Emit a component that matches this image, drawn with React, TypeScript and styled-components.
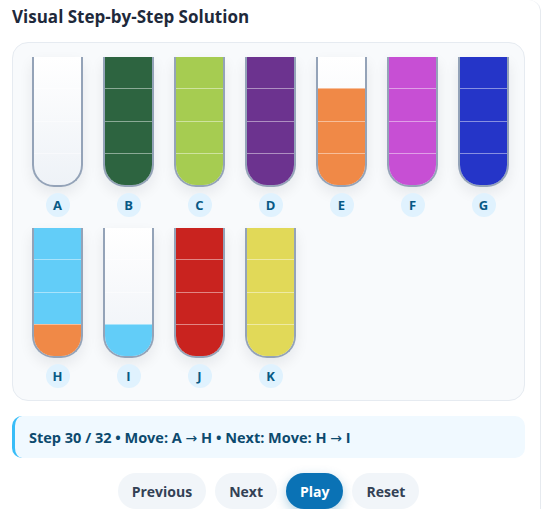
import styled, { createGlobalStyle } from "styled-components";

const GlobalStyle = createGlobalStyle`
  body {
    margin: 0;
    background: #ffffff;
    font-family: "Open Sans", "Liberation Sans", sans-serif;
  }
`;

const Card = styled.div`
  width: 541px;
  box-sizing: border-box;
  padding: 5px 15px 0 12px;
  border-right: 1px solid #e6eaef;
  border-top-right-radius: 12px;
`;

const Title = styled.h2`
  margin: 0 0 13px;
  font-size: 17px;
  line-height: 24px;
  font-weight: 700;
  color: #1e293b;
`;

const Board = styled.div`
  display: flex;
  flex-wrap: wrap;
  gap: 11px 20px;
  padding: 14px 12px 12px 19px;
  background: #f8fafc;
  border: 1px solid #e6ebf1;
  border-radius: 16px;
  box-sizing: border-box;
`;

const Column = styled.div`
  display: flex;
  flex-direction: column;
  align-items: center;
  gap: 6px;
  width: 51px;
`;

const Tube = styled.div`
  width: 51px;
  height: 130px;
  box-sizing: border-box;
  border: 2px solid #94a3b8;
  border-top: none;
  border-radius: 0 0 22px 22px;
  overflow: hidden;
  display: flex;
  flex-direction: column;
  background: linear-gradient(180deg, #ffffff 0%, #eef2f7 100%);
  box-shadow: 0 6px 14px rgba(15, 23, 42, 0.08);
`;

const Slot = styled.div<{ $color?: string }>`
  flex: 1;
  background: ${(p) => p.$color ?? "transparent"};
  & + & {
    border-top: 1px solid
      ${(p) => (p.$color ? "rgba(255, 255, 255, 0.45)" : "rgba(226, 232, 240, 0.7)")};
  }
`;

const Label = styled.div`
  width: 24px;
  height: 24px;
  border-radius: 50%;
  background: #e0f2fe;
  color: #075985;
  font-size: 13px;
  font-weight: 700;
  display: flex;
  align-items: center;
  justify-content: center;
`;

const Status = styled.div`
  margin-top: 15px;
  height: 42px;
  box-sizing: border-box;
  padding: 0 14px;
  display: flex;
  align-items: center;
  background: #f0f9ff;
  border-left: 3px solid #38bdf8;
  border-radius: 10px;
  color: #0c4a6e;
  font-size: 14.5px;
  font-weight: 700;
`;

const Arrow = styled.span`
  font-family: "DejaVu Sans", sans-serif;
  font-weight: 400;
  font-size: 14px;
`;

const Controls = styled.div`
  display: flex;
  justify-content: center;
  gap: 9px;
  margin-top: 15px;
`;

const Button = styled.button<{ $primary?: boolean }>`
  height: 36px;
  padding: 0 14px;
  border: none;
  border-radius: 18px;
  font-family: inherit;
  font-size: 14px;
  font-weight: 700;
  background: ${(p) => (p.$primary ? "#0a72b5" : "#f1f5f9")};
  color: ${(p) => (p.$primary ? "#ffffff" : "#334155")};
  box-shadow: ${(p) => (p.$primary ? "0 4px 12px rgba(3, 105, 161, 0.3)" : "none")};
  cursor: pointer;
`;

const colors: Record<string, string> = {
  green: "#2d6440",
  lime: "#a6cc51",
  purple: "#6c338f",
  orange: "#f08947",
  pink: "#c74fd4",
  blue: "#2535c8",
  sky: "#62cdf8",
  red: "#c9231f",
  yellow: "#e1d958",
};

// slots listed top to bottom, null = empty
const tubes: { name: string; slots: (string | null)[] }[] = [
  { name: "A", slots: [null, null, null, null] },
  { name: "B", slots: ["green", "green", "green", "green"] },
  { name: "C", slots: ["lime", "lime", "lime", "lime"] },
  { name: "D", slots: ["purple", "purple", "purple", "purple"] },
  { name: "E", slots: [null, "orange", "orange", "orange"] },
  { name: "F", slots: ["pink", "pink", "pink", "pink"] },
  { name: "G", slots: ["blue", "blue", "blue", "blue"] },
  { name: "H", slots: ["sky", "sky", "sky", "orange"] },
  { name: "I", slots: [null, null, null, "sky"] },
  { name: "J", slots: ["red", "red", "red", "red"] },
  { name: "K", slots: ["yellow", "yellow", "yellow", "yellow"] },
];

export default function App() {
  return (
    <>
      <GlobalStyle />
      <Card>
        <Title>Visual Step-by-Step Solution</Title>
        <Board>
          {tubes.map((t) => (
            <Column key={t.name}>
              <Tube>
                {t.slots.map((s, i) => (
                  <Slot key={i} $color={s ? colors[s] : undefined} />
                ))}
              </Tube>
              <Label>{t.name}</Label>
            </Column>
          ))}
        </Board>
        <Status>
          <span>
            Step 30 / 32 • Move: A <Arrow>→</Arrow> H • Next: Move: H <Arrow>→</Arrow> I
          </span>
        </Status>
        <Controls>
          <Button>Previous</Button>
          <Button>Next</Button>
          <Button $primary>Play</Button>
          <Button>Reset</Button>
        </Controls>
      </Card>
    </>
  );
}
